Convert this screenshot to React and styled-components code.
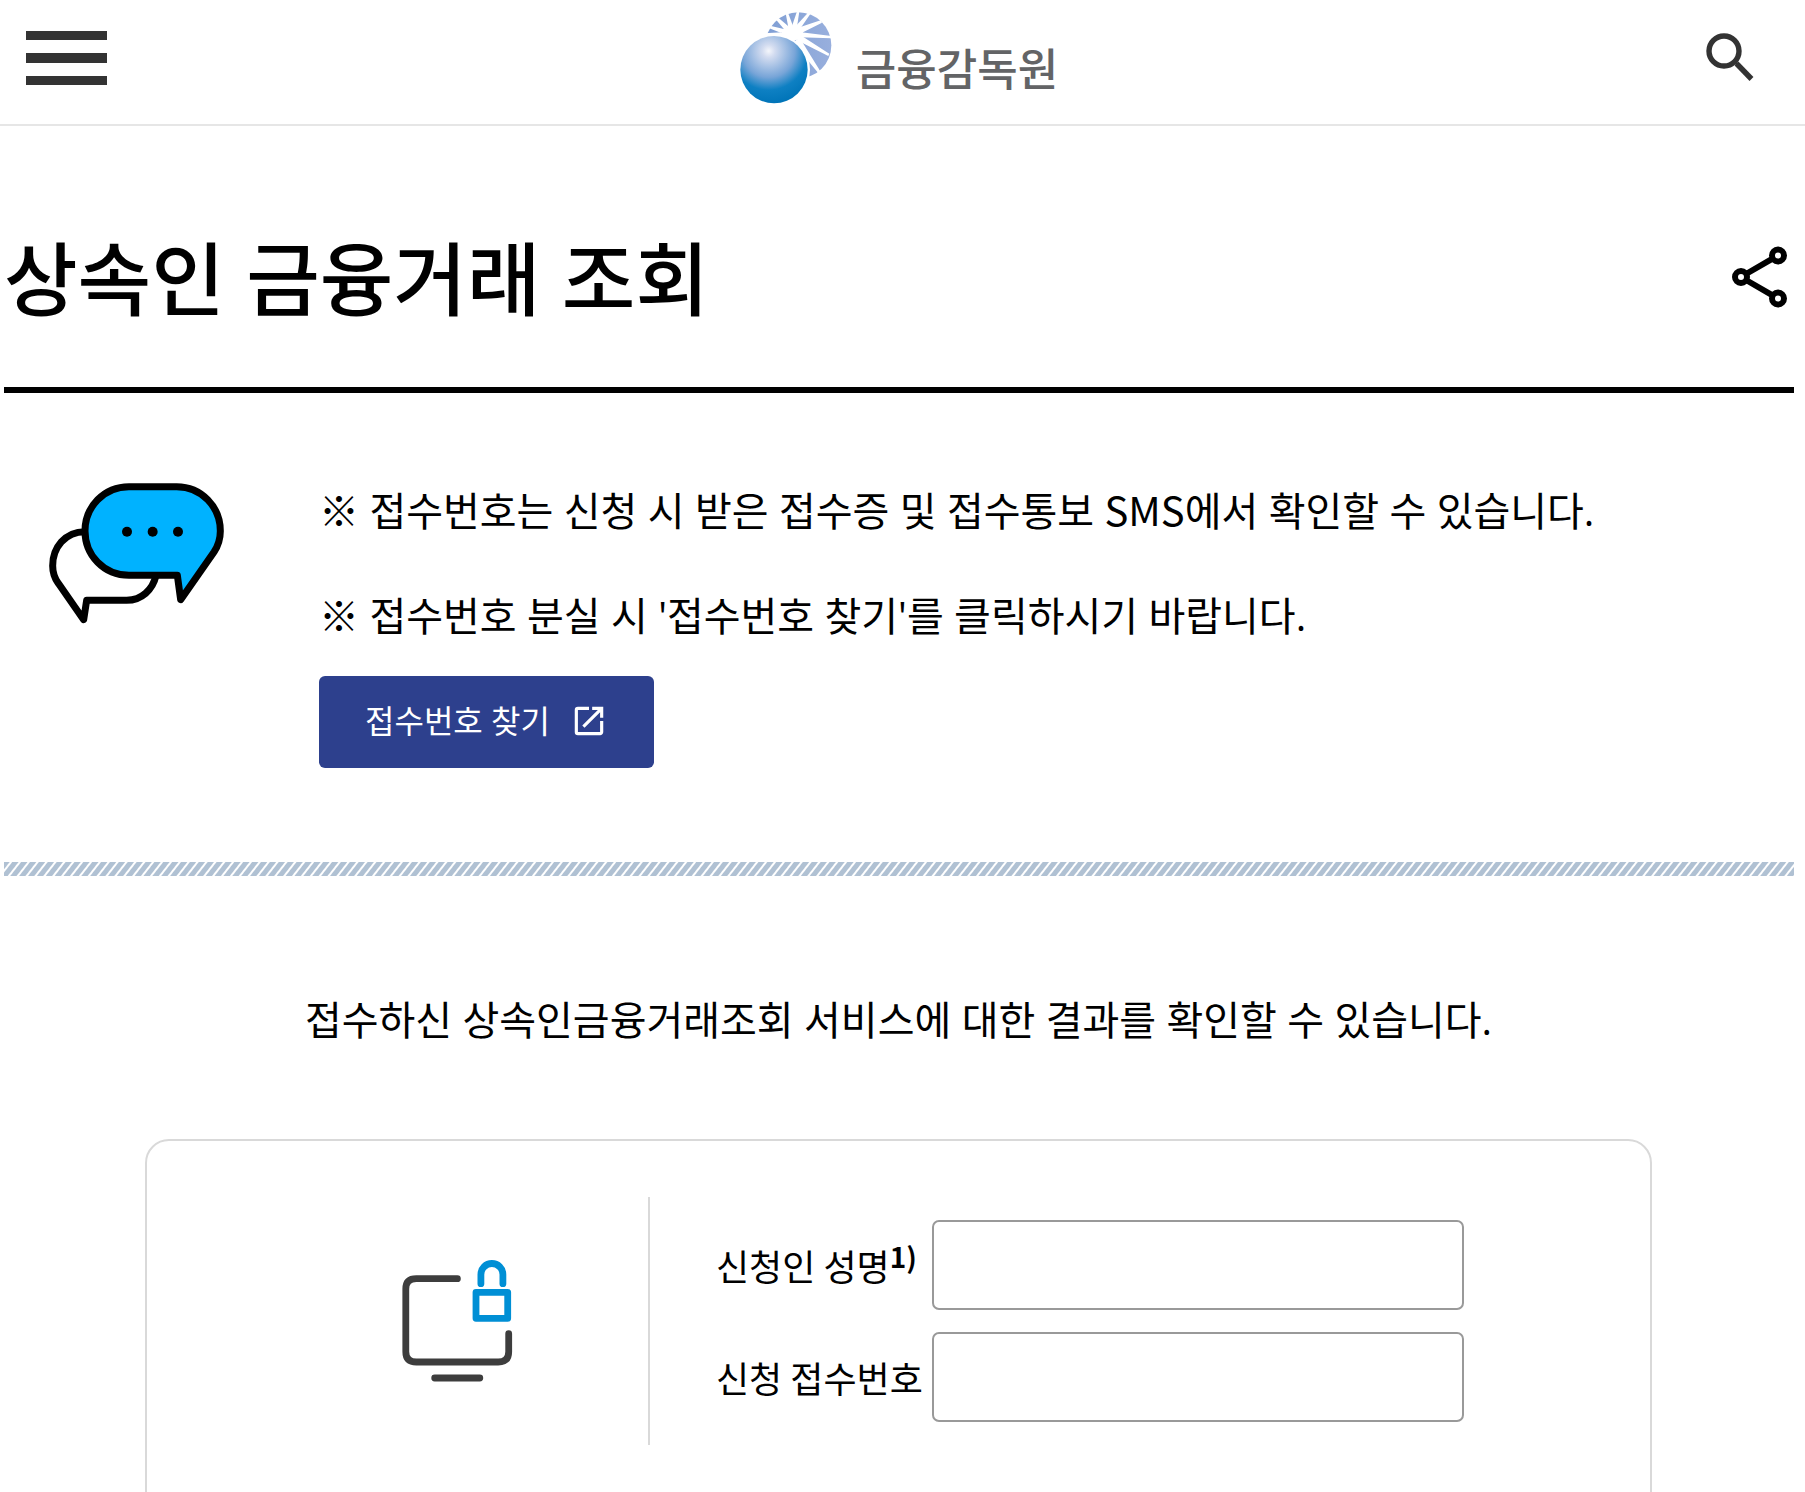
import React from "react";
import styled, { createGlobalStyle } from "styled-components";
import { MdOpenInNew } from "react-icons/md";

const GlobalStyle = createGlobalStyle`
  *, *::before, *::after { box-sizing: border-box; }
  body {
    margin: 0;
    background: #fff;
    color: #000;
    font-family: "Noto Sans CJK KR", "Noto Sans", sans-serif;
  }
`;

const Header = styled.header`
  display: grid;
  grid-template-columns: 1fr auto 1fr;
  align-items: center;
  height: 126px;
  padding: 0 33px 0 26px;
  border-bottom: 2px solid #e6e6e6;
`;

const IconButton = styled.button`
  display: flex;
  justify-self: ${(p) => p.$side};
  padding: ${(p) => p.$padding || "0"};
  border: 0;
  background: none;
  color: inherit;
  cursor: pointer;
`;

const Logo = styled.a`
  display: flex;
  align-items: center;
  gap: 24px;
  padding-bottom: 8px;
  color: #636466;
  font-size: 44px;
  line-height: 60px;
  font-weight: 500;
  text-decoration: none;
`;

const LogoName = styled.span`
  padding-top: 18px;
`;

const Main = styled.main`
  padding: 0 11px 0 4px;
`;

const TitleRow = styled.div`
  display: flex;
  align-items: center;
  justify-content: space-between;
  padding: 91px 7px 50px 0;
  border-bottom: 6px solid #000;
`;

const Title = styled.h1`
  margin: 0;
  padding-top: 6px;
  font-family: Inter, "Noto Sans CJK KR", sans-serif;
  font-size: 80px;
  line-height: 114px;
  font-weight: 500;
`;

const Notice = styled.section`
  display: flex;
  align-items: flex-start;
  gap: 90px;
  padding: 88px 0 94px 44px;
`;

const NoticeBody = styled.div`
  display: flex;
  flex-direction: column;
  align-items: flex-start;
`;

const Text = styled.p`
  margin: 0;
  font-family: "Open Sans", "Noto Sans CJK KR", sans-serif;
  font-size: 40px;
  line-height: 60px;
  text-align: ${(p) => (p.$center ? "center" : "left")};

  & + & {
    margin-top: 45px;
  }
`;

const Term = styled.span`
  font-family: "Noto Sans CJK KR", sans-serif;
  line-height: 1;
`;

const FindButton = styled.button`
  display: flex;
  align-items: center;
  gap: 20px;
  height: 92px;
  margin-top: 30px;
  padding: 0 46px 3px;
  border: 0;
  border-radius: 6px;
  background: #2d408d;
  color: #fff;
  font-family: "Open Sans", "Noto Sans CJK KR", sans-serif;
  font-size: 32px;
  line-height: 48px;
  cursor: pointer;
`;

const StripeBar = styled.div`
  height: 14px;
  background: repeating-linear-gradient(
    128deg,
    #b0c1d3 0,
    #b0c1d3 4px,
    #fff 5px,
    #fff 6px,
    #b0c1d3 7px
  );
`;

const Lookup = styled.section`
  padding: 114px 142px 0 141px;
`;

const Card = styled.form`
  display: flex;
  min-height: 420px;
  margin-top: 89px;
  padding: 56px 0;
  border: 2px solid #d9d9d9;
  border-radius: 24px;
`;

const CardArt = styled.div`
  display: flex;
  flex: 0 0 503px;
  align-items: center;
  justify-content: flex-end;
  height: 248px;
  padding-right: 135px;
  border-right: 2px solid #d9d9d9;
`;

const Fields = styled.div`
  display: flex;
  flex: 1;
  flex-direction: column;
  gap: 22px;
  padding: 23px 186px 0 66px;
`;

const Field = styled.div`
  display: grid;
  grid-template-columns: 216px 1fr;
  align-items: center;
`;

const Label = styled.label`
  font-size: 36px;
  line-height: 60px;
`;

const NoteMark = styled.sup`
  font-size: 28px;
  line-height: 0;
  font-weight: 700;
`;

const Input = styled.input`
  width: 100%;
  height: 90px;
  padding: 0 20px;
  border: 2px solid #999;
  border-radius: 7px;
  background: #fff;
  font: inherit;
  font-size: 36px;
`;

const MenuIcon = () => (
  <svg width="81" height="54" viewBox="0 0 81 54" fill="#333" aria-hidden="true">
    <rect width="81" height="9" />
    <rect y="22" width="81" height="10" />
    <rect y="45" width="81" height="9" />
  </svg>
);

const SearchIcon = () => (
  <svg width="48" height="48" viewBox="0 0 48 48" fill="none" stroke="#333" aria-hidden="true">
    <circle cx="18" cy="18" r="15" strokeWidth="5.4" />
    <path d="M30.5 30.5 45.5 46" strokeWidth="5.4" />
    <path d="M28 28 32 32" strokeWidth="3" />
  </svg>
);

const ShareIcon = () => (
  <svg width="55" height="62" viewBox="0 0 55 62" fill="none" stroke="#000" strokeWidth="6" aria-hidden="true">
    <circle cx="46" cy="9.5" r="6" />
    <circle cx="9" cy="31" r="6" />
    <circle cx="46" cy="52.5" r="6" />
    <path d="M14 28 41 12.4M14 34 41 49.6" />
  </svg>
);

const LogoMark = () => (
  <svg width="92" height="92" viewBox="62 38 276 276" aria-hidden="true">
    <defs>
      <radialGradient id="ball" cx="148" cy="155" r="158" gradientUnits="userSpaceOnUse">
        <stop offset="0" stopColor="#f4f6fb" />
        <stop offset="0.12" stopColor="#d3dcf0" />
        <stop offset="0.5" stopColor="#78a5d8" />
        <stop offset="0.74" stopColor="#0e80c3" />
        <stop offset="1" stopColor="#0074b8" />
      </radialGradient>
      <linearGradient id="disc" x1="0" y1="0" x2="1" y2="0">
        <stop offset="0" stopColor="#7f9ed4" />
        <stop offset="1" stopColor="#98afdd" />
      </linearGradient>
    </defs>
    <circle cx="237" cy="138" r="99" fill="url(#disc)" />
    <g fill="#fff">
      <path d="M240 98 336 110V117L240 114Z" />
      <path d="M244 108 330 163 327 170 236 124Z" />
      <path d="M240 114 302 214 296 220 222 130Z" />
      <path d="M234 86 304 63 308 70 248 100Z" />
      <path d="M226 84 266 40 273 44 240 92Z" />
      <path d="M216 86 233 36H240L232 90Z" />
      <path d="M208 90 199 42 206 40 224 88Z" />
      <path d="M198 94 171 62 178 56 216 88Z" />
      <path d="M184 100 148 86 152 79 206 92Z" />
      <path d="M180 114 134 108V102L204 98Z" />
      <ellipse cx="219" cy="102" rx="32" ry="22" />
      <circle cx="164" cy="211" r="108" />
    </g>
    <circle cx="164" cy="211" r="101" fill="url(#ball)" />
  </svg>
);

const ChatIcon = () => (
  <svg
    width="181"
    height="148"
    viewBox="54 62 543 444"
    fill="none"
    stroke="#000"
    strokeWidth="21"
    strokeLinejoin="round"
    aria-hidden="true"
  >
    <path d="M165 214C105 214 68 262 68 316C68 336 74 354 85 369L161 478L170 420H290C335 420 368 388 378 346" />
    <path
      d="M297 79H440C515 79 571 140 571 212C571 235 564 257 552 275L452 418L442 345H297C222 345 165 285 165 212S222 79 297 79Z"
      fill="#00b2ff"
    />
    <g fill="#000" stroke="none">
      <circle cx="291" cy="214" r="15" />
      <circle cx="368" cy="214" r="15" />
      <circle cx="444" cy="214" r="15" />
    </g>
  </svg>
);

const SecureScreenIcon = () => (
  <svg
    width="111"
    height="122"
    viewBox="0 0 111 122"
    fill="none"
    strokeWidth="6.8"
    strokeLinecap="round"
    strokeLinejoin="round"
    aria-hidden="true"
  >
    <path
      d="M55.4 18.7H14.3Q3.8 18.7 3.8 29V91.7Q3.8 102 14.3 102H96.2Q106.7 102 106.7 91.7V73.7M32.7 118H77.8"
      stroke="#3d3d3d"
    />
    <path d="M78.9 23.7V14.5A11 11 0 0 1 100.9 14.5V23.7M74 32.3H105.7V58.3H74Z" stroke="#008fd5" />
  </svg>
);

export default function App() {
  return (
    <>
      <GlobalStyle />
      <Header>
        <IconButton type="button" $side="start" $padding="0 0 8px" aria-label="메뉴">
          <MenuIcon />
        </IconButton>
        <Logo href="#">
          <LogoMark />
          <LogoName>금융감독원</LogoName>
        </Logo>
        <IconButton type="button" $side="end" $padding="0 18px 10px 0" aria-label="검색">
          <SearchIcon />
        </IconButton>
      </Header>
      <Main>
        <TitleRow>
          <Title>상속인 금융거래 조회</Title>
          <IconButton type="button" aria-label="공유">
            <ShareIcon />
          </IconButton>
        </TitleRow>
        <Notice>
          <ChatIcon />
          <NoticeBody>
            <Text>
              ※ 접수번호는 신청 시 받은 접수증 및 접수통보 <Term>SMS</Term>에서 확인할 수 있습니다.
            </Text>
            <Text>※ 접수번호 분실 시 '접수번호 찾기'를 클릭하시기 바랍니다.</Text>
            <FindButton type="button">
              접수번호 찾기
              <MdOpenInNew size={38} aria-hidden="true" />
            </FindButton>
          </NoticeBody>
        </Notice>
        <StripeBar />
        <Lookup>
          <Text $center>접수하신 상속인금융거래조회 서비스에 대한 결과를 확인할 수 있습니다.</Text>
          <Card onSubmit={(e) => e.preventDefault()}>
            <CardArt>
              <SecureScreenIcon />
            </CardArt>
            <Fields>
              <Field>
                <Label htmlFor="applicant">
                  신청인 성명<NoteMark>1)</NoteMark>
                </Label>
                <Input id="applicant" type="text" />
              </Field>
              <Field>
                <Label htmlFor="receipt">신청 접수번호</Label>
                <Input id="receipt" type="text" />
              </Field>
            </Fields>
          </Card>
        </Lookup>
      </Main>
    </>
  );
}
